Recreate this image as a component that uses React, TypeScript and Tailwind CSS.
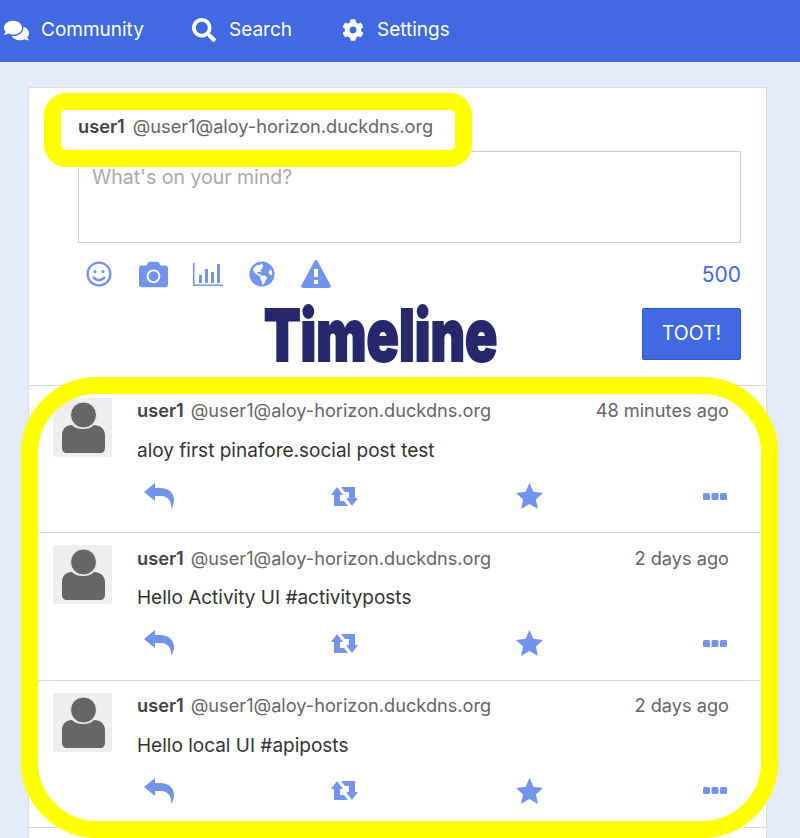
import { FaComments, FaSearch, FaCog, FaRegSmile, FaCamera, FaGlobeAmericas } from 'react-icons/fa';

const posts = [
  { time: '48 minutes ago', text: 'aloy first pinafore.social post test' },
  { time: '2 days ago', text: 'Hello Activity UI #activityposts' },
  { time: '2 days ago', text: 'Hello local UI #apiposts' },
];

function ChartIcon() {
  return (
    <svg width="30" height="23" viewBox="0 0 30 23" fill="#7493ea">
      <rect x="0" y="0" width="1.5" height="23" />
      <rect x="0" y="21.5" width="30" height="1.5" />
      <rect x="6" y="12" width="3" height="8" />
      <rect x="12" y="6" width="3" height="14" />
      <rect x="18" y="9" width="3" height="11" />
      <rect x="24" y="1" width="3" height="19" />
    </svg>
  );
}

function WarningIcon() {
  return (
    <svg width="30" height="28" viewBox="0 0 30 28" fill="#7493ea" fillRule="evenodd">
      <path d="M13.5 1Q15 -1 16.5 1L29.7 25.5Q30.5 28 28 28H2Q-0.5 28 0.3 25.5ZM13 9V17H17V9ZM13 20V24H17V20Z" />
    </svg>
  );
}

function ReplyIcon() {
  return (
    <svg width="30" height="26" viewBox="0 0 30 26" fill="#7493ea">
      <path d="M0 9L11 0V5H16C25 5 30 10 30 17C30 20 29 23 27 26C28 20 25 13 17 13H11V18Z" />
    </svg>
  );
}

function RetweetIcon() {
  return (
    <svg width="27" height="19" viewBox="0 0 27 19" fill="#7493ea">
      <path d="M0 8H3V19H17L13 14H9V8H12L6 0Z" />
      <path d="M27 11H24V0H10L14 5H18V11H15L21 19Z" />
    </svg>
  );
}

function StarIcon() {
  return (
    <svg width="27" height="26" viewBox="0 0 27 26" fill="#7493ea">
      <polygon points="13.5,0 17.4,8.8 27,9.9 19.9,16.4 21.9,26 13.5,21.1 5.1,26 7.1,16.4 0,9.9 9.6,8.8" />
    </svg>
  );
}

function MoreIcon() {
  return (
    <svg width="24" height="7" viewBox="0 0 24 7" fill="#7493ea">
      <rect x="0" y="0" width="7" height="7" rx="1.5" />
      <rect x="8.5" y="0" width="7" height="7" rx="1.5" />
      <rect x="17" y="0" width="7" height="7" rx="1.5" />
    </svg>
  );
}

function Avatar() {
  return (
    <div className="w-[59px] h-[59px] shrink-0 rounded-[2px] bg-[#eeeeee]">
      <svg width="59" height="59" viewBox="0 0 59 59" fill="#666666">
        <path d="M9 37c0-6 4-10 10-10 3 3 7 4 11 4s8-1 11-4c6 0 11 4 11 10v13c0 3-2 5-5 5H14c-3 0-5-2-5-5z" />
        <circle cx="30.5" cy="17" r="13" stroke="#eeeeee" strokeWidth="1" />
      </svg>
    </div>
  );
}

function Post({ time, text }: { time: string; text: string }) {
  return (
    <div className="h-[147.4px] border-t border-[#d9d9d9] pt-[12px] pl-[24px] pr-[37px] flex gap-[25px]">
      <Avatar />
      <div className="flex-1">
        <div className="flex justify-between items-center h-[28px] -mt-[1px] text-[18.2px] text-[#666666]">
          <div className="flex">
            <span className="font-semibold text-[#444444]">user1</span>
            <span className="ml-[7px]">@user1@aloy-horizon.duckdns.org</span>
          </div>
          <span>{time}</span>
        </div>
        <p className="mt-[12px] text-[19px] leading-[28px] text-[#333333]">{text}</p>
        <div className="mt-[18px] pl-[6px] -mr-[2px] h-[26px] flex justify-between items-center">
          <div className="w-[32px] flex justify-center"><ReplyIcon /></div>
          <div className="w-[32px] flex justify-center"><RetweetIcon /></div>
          <div className="w-[32px] flex justify-center"><StarIcon /></div>
          <div className="w-[32px] flex justify-center"><MoreIcon /></div>
        </div>
      </div>
    </div>
  );
}

export default function App() {
  return (
    <div className="relative h-[838px] overflow-hidden bg-[#e5ebf9] font-['Inter','Liberation_Sans',sans-serif]">
      {/* Nav */}
      <nav className="h-[62px] pb-[2px] bg-[#4169e1] flex items-center text-white text-[19px]">
        <div className="flex items-center pl-[4px] w-[192px]">
          <FaComments size={25} />
          <span className="ml-[12px]">Community</span>
        </div>
        <div className="flex items-center w-[150px]">
          <FaSearch size={24} />
          <span className="ml-[13px]">Search</span>
        </div>
        <div className="flex items-center">
          <FaCog size={22} />
          <span className="ml-[13px]">Settings</span>
        </div>
      </nav>

      {/* Card */}
      <div className="mt-[25px] ml-[28px] mr-[33px] h-[800px] bg-white border border-[#dddddd]">
        <div className="relative h-[297px] pt-[27px] pl-[49px] pr-[25px]">
          <div className="h-[24px] flex items-center text-[18.2px] text-[#666666]">
            <span className="font-semibold text-[#444444]">user1</span>
            <span className="ml-[8px]">@user1@aloy-horizon.duckdns.org</span>
          </div>
          <div className="mt-[12px] h-[92px] border border-[#cccccc] px-[13px] pt-[11px] text-[19.5px] leading-[28px] text-[#aaaaaa]">
            What's on your mind?
          </div>
          <div className="mt-[17px] h-[28px] flex items-center">
            <div className="flex items-center text-[#7493ea]">
              <FaRegSmile size={26} className="ml-[8px]" />
              <FaCamera size={29} className="ml-[27px]" />
              <div className="ml-[25px]"><ChartIcon /></div>
              <FaGlobeAmericas size={26} className="ml-[26px]" />
              <div className="ml-[26px]"><WarningIcon /></div>
            </div>
            <span className="ml-auto text-[21px] leading-[30px] pt-[1px] text-[#4169e1]">500</span>
          </div>
          <div className="mt-[20px] flex justify-end">
            <button className="w-[99px] h-[52px] rounded-[2px] bg-[#4169e1] border border-[#3259c9] text-white text-[19.5px]">TOOT!</button>
          </div>
          <div className="absolute left-[235px] top-[207px] w-[234px] flex justify-center">
            <span className="text-[72px] leading-[80px] font-black text-[#29276b] whitespace-nowrap scale-x-[0.74] [-webkit-text-stroke:2px_#29276b]">
              Timeline
            </span>
          </div>
        </div>

        {posts.map((post, i) => (
          <Post key={i} time={post.time} text={post.text} />
        ))}
        <div className="border-t border-[#d9d9d9]" />
      </div>

      {/* Yellow annotations */}
      <div className="absolute left-[44px] top-[93px] w-[428px] h-[74px] border-[17px] border-[#ffff00] rounded-[22px]" />
      <div className="absolute left-[21px] top-[377px] w-[757px] h-[461px] border-[17px] border-[#ffff00] rounded-[76px]" />
    </div>
  );
}
